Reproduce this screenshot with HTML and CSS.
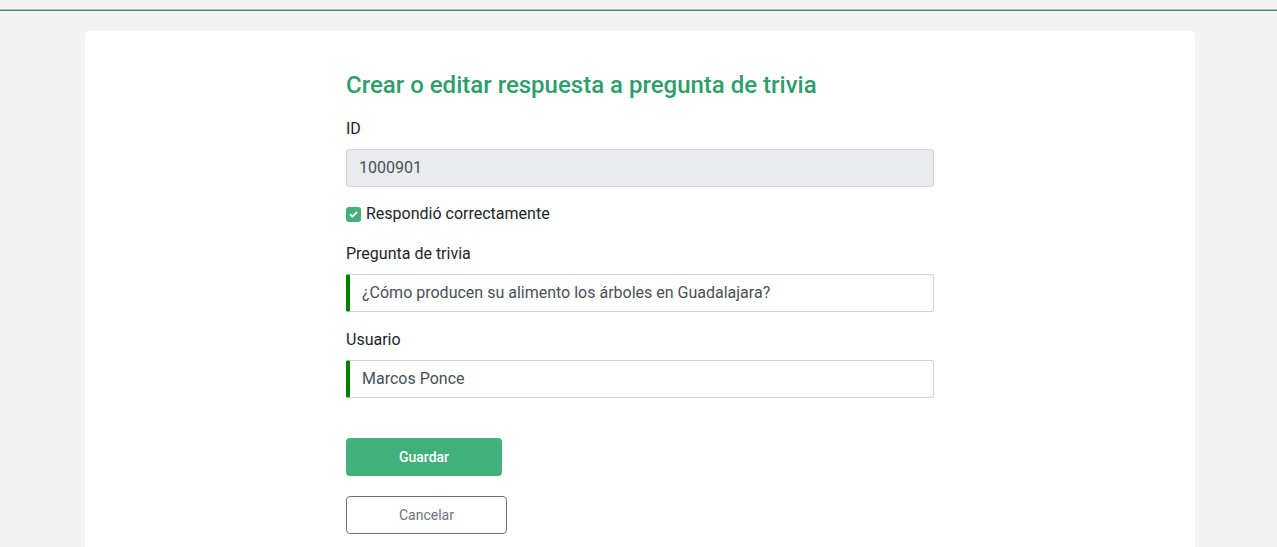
FILE: index.html
```html
<!DOCTYPE html>
<html lang="es">
<head>
<meta charset="utf-8">
<title>Crear o editar respuesta</title>
<link rel="stylesheet" href="styles.css">
</head>
<body>
<div class="topbar"></div>
<main class="card">
  <form class="form">
    <h1 class="title">Crear o editar respuesta a pregunta de trivia</h1>
    <div class="field">
      <label class="label">ID</label>
      <div class="input readonly">1000901</div>
    </div>
    <div class="check-row">
      <span class="checkbox">
        <svg viewBox="0 0 15 15" width="15" height="15"><path d="M4.4 7.7l2 1.9 4.2-4.2" fill="none" stroke="#fff" stroke-width="1.7" stroke-linecap="round" stroke-linejoin="round"/></svg>
      </span>
      <span class="check-label">Respondió correctamente</span>
    </div>
    <div class="field">
      <label class="label">Pregunta de trivia</label>
      <div class="input valid">¿Cómo producen su alimento los árboles en Guadalajara?</div>
    </div>
    <div class="field">
      <label class="label">Usuario</label>
      <div class="input valid">Marcos Ponce</div>
    </div>
    <div class="actions">
      <button type="button" class="btn btn-primary">Guardar</button>
      <button type="button" class="btn btn-outline">Cancelar</button>
    </div>
  </form>
</main>
</body>
</html>
```
FILE: styles.css
```css
* { box-sizing: border-box; }
html, body { margin: 0; padding: 0; }
body {
  background: #f3f3f3;
  font-family: Roboto, "Liberation Sans", sans-serif;
  color: #212529;
  height: 547px;
  overflow: hidden;
}
.topbar {
  height: 10px;
  border-bottom: 1px solid #b4b4b4;
  box-shadow: 0 1px 0 #2e9e6b;
}
.card {
  width: 1110px;
  margin: 21px 0 0 85px;
  background: #fff;
  border-radius: 4px;
  padding-top: 41px;
  height: 560px;
}
.form {
  width: 588px;
  margin: 0 auto;
  display: flex;
  flex-direction: column;
}
.title {
  margin: 0 0 18px;
  font-size: 24px;
  line-height: 26px;
  font-weight: 500;
  color: #2e9e6b;
}
.field { display: flex; flex-direction: column; }
.label {
  font-size: 16px;
  line-height: 24px;
  padding-top: 1px;
  margin-bottom: 8px;
}
.input {
  height: 38px;
  border: 1px solid #ced4da;
  border-radius: 3px;
  padding: 0 12px;
  font-size: 16px;
  line-height: 36px;
  color: #495057;
  background: #fff;
}
.input.readonly { background: #e9ecef; }
.input.valid {
  border-left: 4px solid #008000;
  border-radius: 2px 3px 3px 2px;
}
.check-row {
  display: flex;
  align-items: center;
  gap: 5px;
  height: 24px;
  margin: 15px 0;
}
.checkbox {
  width: 15px;
  height: 15px;
  border-radius: 3px;
  background: #42b07b;
  display: flex;
}
.check-label { font-size: 16px; line-height: 24px; }
.field + .field { margin-top: 15px; }
.actions {
  display: flex;
  flex-direction: column;
  align-items: flex-start;
  gap: 20px;
  margin-top: 40px;
}
.btn {
  height: 38px;
  border-radius: 4px;
  font-family: Roboto, "Liberation Sans", sans-serif;
  font-size: 14px;
  padding: 0;
  cursor: pointer;
}
.btn-primary {
  width: 156px;
  background: #42b07b;
  border: none;
  color: #fff;
  font-weight: 500;
}
.btn-outline {
  width: 161px;
  background: #fff;
  border: 1px solid #6c757d;
  color: #6c757d;
}
```
